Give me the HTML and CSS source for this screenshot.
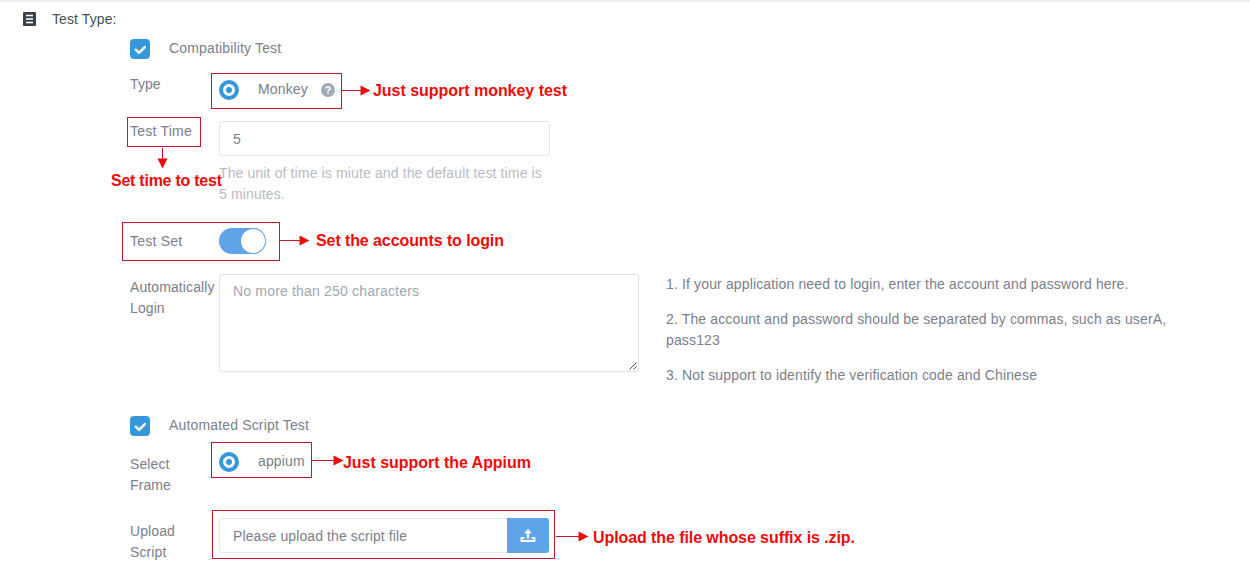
FILE: index.html
```html
<!DOCTYPE html>
<html lang="en">
<head>
<meta charset="utf-8">
<title>Test Type</title>
<link rel="stylesheet" href="styles.css">
</head>
<body>
<main class="page">
  <header class="heading">
    <svg class="heading-icon" width="13" height="14" viewBox="0 0 13 14"><rect width="13" height="14" rx="1" fill="#38424c"/><path d="M3 3.5h7M3 7h7M3 10.5h7" stroke="#fff" stroke-width="1.4"/></svg>
    <span>Test Type:</span>
  </header>
  <form class="form">
    <div class="row row-check">
      <span class="checkbox"><svg width="20" height="20" viewBox="0 0 20 20"><path d="M5.8 10.7l3.2 3.2 5.800-5.800" fill="none" stroke="#fff" stroke-width="2.400" stroke-linecap="round" stroke-linejoin="round"/></svg></span>
      <span class="check-label">Compatibility Test</span>
    </div>
    <div class="row row-type">
      <span class="label">Type</span>
      <div class="radio-line">
        <span class="radio"></span><span class="radio-label monkey">Monkey</span>
        <svg class="help" width="14" height="14" viewBox="0 0 14 14"><circle cx="7" cy="7" r="7" fill="#9eacb6"/><path d="M4.9 5.5C5 3.2 9.1 3.2 9.1 5.5 9.1 6.9 7 6.8 7 8.5" fill="none" stroke="#fff" stroke-width="1.6"/><rect x="6.2" y="9.4" width="1.6" height="1.6" fill="#fff"/></svg>
      </div>
    </div>
    <div class="row row-time">
      <span class="label">Test Time</span>
      <div class="time-field">
        <div class="input">5</div>
        <p class="hint">The unit of time is miute and the default test time is<br>5 minutes.</p>
      </div>
    </div>
    <div class="row row-set">
      <span class="label">Test Set</span>
      <span class="toggle"><span class="knob"></span></span>
    </div>
    <div class="row row-login">
      <span class="label">Automatically Login</span>
      <div class="textarea">No more than 250 characters
        <svg class="grip" width="10" height="10" viewBox="0 0 10 10"><path d="M1.500 8.500L8.500 1.500M5.500 8.500L8.500 5.500" stroke="#555" stroke-width="1"/></svg>
      </div>
      <div class="notes">
        <p>1. If your application need to login, enter the account and password here.</p>
        <p>2. The account and password should be separated by commas, such as userA,<br>pass123</p>
        <p>3. Not support to identify the verification code and Chinese</p>
      </div>
    </div>
    <div class="row row-check2">
      <span class="checkbox"><svg width="20" height="20" viewBox="0 0 20 20"><path d="M5.800 10.700l3.200 3.200 5.800-5.800" fill="none" stroke="#fff" stroke-width="2.400" stroke-linecap="round" stroke-linejoin="round"/></svg></span>
      <span class="check-label">Automated Script Test</span>
    </div>
    <div class="row row-frame">
      <span class="label">Select<br>Frame</span>
      <div class="radio-line"><span class="radio"></span><span class="radio-label">appium</span></div>
    </div>
    <div class="row row-upload">
      <span class="label">Upload<br>Script</span>
      <div class="upload">
        <div class="upload-text">Please upload the script file</div>
        <div class="upload-button"><svg width="16" height="14" viewBox="0 0 16 14"><path d="M8 0l4 4.300H9.200V9.500H6.800V4.300H4z" fill="#fff"/><path d="M1.500 8V12H14.500V8M1.500 8.900H4.500M11.500 8.900H14.500" fill="none" stroke="#fff" stroke-width="1.800"/></svg></div>
      </div>
    </div>
  </form>
  <svg class="callouts" width="1250" height="574" viewBox="0 0 1250 574">
    <g class="frames">
      <rect x="211.500" y="73.500" width="130" height="35"/>
      <rect x="127.500" y="117.500" width="73" height="29"/>
      <rect x="122.500" y="222.500" width="157" height="38"/>
      <rect x="211.500" y="442.500" width="100" height="35"/>
      <rect x="212.500" y="510.500" width="342" height="48"/>
      <path d="M342 90.500H362M162.500 148V160M280 240.500H301M312 460.500H335M556 536.500H580"/>
    </g>
    <g class="heads">
      <path d="M360.500 85.500v10l10-5zM157.500 158.500h10l-5 10zM299.500 235.500v10l10-5zM333.500 455.500v10l10-5zM578.500 531.500v10l10-5z"/>
    </g>
    <g class="captions">
      <text x="373" y="96" textLength="194">Just support monkey test</text>
      <text x="111" y="186" textLength="111">Set time to test</text>
      <text x="316" y="246" textLength="188">Set the accounts to login</text>
      <text x="343" y="468" textLength="188">Just support the Appium</text>
      <text x="593" y="543" textLength="262">Upload the file whose suffix is .zip.</text>
    </g>
  </svg>
</main>
</body>
</html>
```
FILE: styles.css
```css
* { box-sizing: border-box; }
body { margin: 0; background: #fff; }
p { margin: 0; }
svg { display: block; }
.page {
  position: relative;
  width: 1250px;
  height: 574px;
  overflow: hidden;
  background: linear-gradient(#ececec, #fff) 0 0 / 100% 4px no-repeat #fff;
  font: 14px/21px "Liberation Sans", Arial, sans-serif;
  color: #7b808c;
}
.heading { display: flex; height: 38px; padding: 9px 0 0 23px; gap: 16px; color: #4a505a; letter-spacing: .1px; }
.heading-icon { margin-top: 3px; }
.form { padding-left: 130px; }
.row { display: flex; align-items: flex-start; }
.row-check { height: 35px; }
.row-type { height: 48px; }
.row-time { height: 107px; }
.row-set { height: 46px; }
.row-login { height: 141px; }
.row-check2 { height: 37px; }
.row-frame { height: 66px; }
.row-upload { height: 56px; }
.label { width: 89px; flex: none; letter-spacing: .1px; }
.row-time .label, .row-set .label { letter-spacing: .22px; }
.row-type .label { padding-top: 1px; }
.row-type .radio-line { padding-top: 7px; }
.row-set .label { padding-top: 3px; }
.row-frame .label { padding-top: 2px; }
.row-login .label, .row-upload .label { padding-top: 3px; }
.check-label { letter-spacing: .16px; }
.checkbox { width: 20px; height: 20px; margin: 1px 19px 0 0; border-radius: 4px; background: #3498db; }
.radio-line { display: flex; align-items: flex-start; }
.radio { width: 20px; height: 20px; margin-right: 19px; border: 4px solid #3498db; border-radius: 50%; background: radial-gradient(circle at center, #3498db 2.600px, #fff 3.400px) padding-box; }
.radio-label { margin-top: -1px; letter-spacing: .15px; }
.monkey { width: 63px; }
.help { margin-top: 3px; }
.input { width: 331px; height: 35px; padding: 7px 13px; border: 1px solid #e1e4e8; border-radius: 3px; }
.hint { padding-top: 7px; color: #b9bbc4; letter-spacing: .13px; white-space: nowrap; }
.toggle { display: flex; justify-content: flex-end; width: 47px; height: 26px; padding: 1px; border-radius: 13px; background: #5fa4e8; }
.knob { width: 24px; height: 24px; border-radius: 50%; background: #fff; }
.textarea { position: relative; width: 420px; height: 98px; padding: 6px 13px; border: 1px solid #dfe2e5; border-radius: 3px; color: #a0a8b2; letter-spacing: .18px; }
.grip { position: absolute; right: 0; bottom: 0; }
.notes { display: grid; align-content: start; gap: 14px; padding-left: 27px; letter-spacing: .14px; white-space: nowrap; }
.upload { display: flex; width: 330px; height: 35px; }
.upload-text { flex: 1; padding: 7px 13px; border: 1px solid #e1e8ee; border-right: 0; border-radius: 3px 0 0 3px; letter-spacing: .1px; }
.upload-button { display: flex; align-items: center; justify-content: center; width: 42px; border-radius: 0 3px 3px 0; background: #5fa4e8; }
.callouts { position: absolute; inset: 0; }
.frames { fill: none; stroke: #c5142b; stroke-width: 1; }
.heads { fill: #f00a0a; }
.captions { fill: #f00a0a; font-size: 16px; font-weight: bold; }
```
